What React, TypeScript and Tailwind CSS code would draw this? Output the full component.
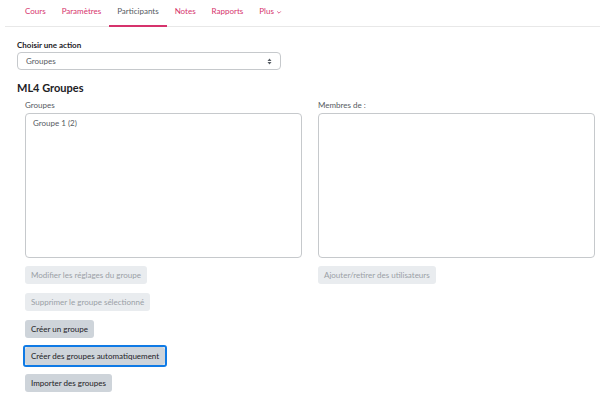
const tabs = ['Cours', 'Paramètres', 'Participants', 'Notes', 'Rapports'];

const font = { fontFamily: 'Lato, "Liberation Sans", sans-serif' };

function Btn({ label, disabled, focused }: { label: string; disabled?: boolean; focused?: boolean }) {
  return (
    <div className={focused ? 'flex rounded-[3px] border-2 border-[#0f7ae5] -ml-[2px] -my-[2px] w-fit' : 'flex w-fit'}>
      <button
        className={
          'block h-[18px] px-[6px] rounded-[3px] text-[8px] leading-none ' +
          (disabled ? 'bg-[#e9ecef] text-[#9aa0a6]' : 'bg-[#ced4da] text-[#1d2125]')
        }
      >
        {label}
      </button>
    </div>
  );
}

export default function App() {
  return (
    <div className="w-[600px] h-[398px] bg-white overflow-hidden" style={font}>
      <div className="ml-[5px] border-b border-[#e8e8e8] h-[27px] flex items-stretch pl-[12px]">
        {tabs.map((t) => (
          <div
            key={t}
            className={
              'px-[8px] flex items-center text-[8px] pb-[4px] ' +
              (t === 'Participants'
                ? 'text-[#555b62] border-b-2 border-[#d6336c] mb-[-1px]'
                : 'text-[#d6336c]')
            }
          >
            {t}
          </div>
        ))}
        <div className="px-[8px] flex items-center gap-[2px] text-[8px] pb-[4px] text-[#d6336c]">
          Plus
          <svg width="6" height="6" viewBox="0 0 10 10" className="mt-[1px]">
            <path d="M2 4l3 3 3-3" fill="none" stroke="#d6336c" strokeWidth="1.3" />
          </svg>
        </div>
      </div>

      <div className="pl-[17px] pr-[5px] pt-[13px]">
        <div className="text-[8px] font-bold text-[#1d2125] leading-[10px]">Choisir une action</div>
        <div className="mt-[2px] w-[264px] h-[18px] border border-[#c6c9cc] rounded-[4px] flex items-center justify-between px-[8px] text-[8px] text-[#555b62]">
          <span>Groupes</span>
          <svg width="5" height="7" viewBox="0 0 5 7">
            <path d="M2.5 0.5L4.5 3H0.5Z M2.5 6.5L4.5 4H0.5Z" fill="#555b62" />
          </svg>
        </div>

        <div className="mt-[11px] text-[11px] font-bold text-[#1d2125] leading-[14px]">ML4 Groupes</div>

        <div className="pl-[8px] mt-[5px] grid grid-cols-2 gap-x-[16px]">
          <div>
            <div className="text-[8px] text-[#555b62] leading-[10px]">Groupes</div>
            <div className="mt-[3px] h-[145px] border border-[#c6c9cc] rounded-[4px] px-[7px] py-[3px] text-[8px] text-[#555b62]">
              Groupe 1 (2)
            </div>
            <div className="mt-[8px] flex flex-col gap-[9px]">
              <Btn label="Modifier les réglages du groupe" disabled />
              <Btn label="Supprimer le groupe sélectionné" disabled />
              <Btn label="Créer un groupe" />
              <Btn label="Créer des groupes automatiquement" focused />
              <Btn label="Importer des groupes" />
            </div>
          </div>
          <div>
            <div className="text-[8px] text-[#555b62] leading-[10px]">Membres de :</div>
            <div className="mt-[3px] h-[145px] border border-[#c6c9cc] rounded-[4px]" />
            <div className="mt-[8px]">
              <Btn label="Ajouter/retirer des utilisateurs" disabled />
            </div>
          </div>
        </div>
      </div>
    </div>
  );
}
